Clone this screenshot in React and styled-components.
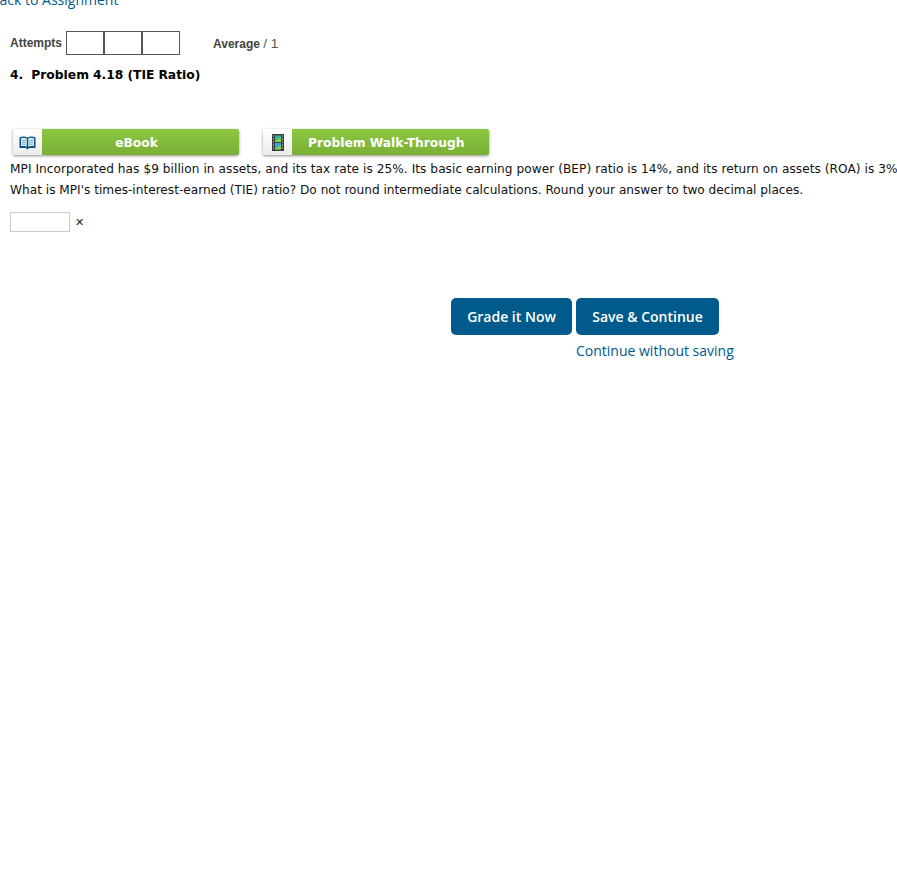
import React from "react";
import styled, { createGlobalStyle } from "styled-components";

const GlobalStyle = createGlobalStyle`
  html, body {
    margin: 0;
    padding: 0;
    background: #fff;
    overflow: hidden;
  }
`;

const Page = styled.div`
  width: 897px;
  height: 884px;
  overflow: hidden;
  position: relative;
`;

const BackLink = styled.a`
  display: block;
  margin: -11px 0 0 -9.5px;
  height: 21px;
  font: 400 14px/22px "Open Sans", sans-serif;
  color: #005a8c;
`;

const ScoreRow = styled.div`
  display: flex;
  align-items: center;
  margin: 21px 0 0 10px;
  height: 24px;
  font-family: "Liberation Sans", Arial, sans-serif;
  font-size: 12px;
  color: #444;
`;

const ScoreLabel = styled.b`
  margin-right: 4px;
`;

const Boxes = styled.div`
  display: flex;
  border: 1px solid #555;
  height: 22px;
  width: 112px;
`;

const Box = styled.div`
  flex: 1;
  & + & {
    border-left: 2px solid #555;
  }
`;

const Average = styled.div`
  margin-left: 33px;
  b {
    font-weight: 700;
  }
  span {
    font-size: 13.5px;
    color: #555;
  }
`;

const ProblemTitle = styled.h2`
  margin: 12px 0 0 10px;
  font: 700 12.3px/16px "DejaVu Sans", Verdana, sans-serif;
  word-spacing: -0.25px;
  color: #000;
  white-space: pre;
`;

const ButtonRow = styled.div`
  display: flex;
  margin: 46px 0 0 13px;
  gap: 24px;
`;

const ResourceButton = styled.div`
  display: flex;
  width: 226px;
  height: 26px;
  box-shadow: 0 1px 3px rgba(0, 0, 0, 0.45);
  border-radius: 2px;
  overflow: hidden;
`;

const IconCell = styled.div`
  width: 29px;
  flex: none;
  display: flex;
  align-items: center;
  justify-content: center;
  background: linear-gradient(#fff, #ececec);
  svg {
    display: block;
  }
`;

const ButtonLabel = styled.div`
  flex: 1;
  display: flex;
  align-items: center;
  justify-content: ${(p) => (p.$left ? "flex-start" : "center")};
  padding: ${(p) => (p.$left ? "1px 0 0 16px" : "1px 8px 0 0")};
  background: linear-gradient(#8dc642, #79b035);
  color: #fff;
  font: 700 12.25px "DejaVu Sans", Verdana, sans-serif;
`;

const QuestionBlock = styled.div`
  margin-top: 4px;
`;

const Question = styled.p`
  margin: 0 0 0 10px;
  font: 400 12.15px/21px "DejaVu Sans", Verdana, sans-serif;
  letter-spacing: ${(p) => (p.$wide ? "0.052px" : "0")};
  color: #111;
  white-space: nowrap;
`;

const AnswerRow = styled.div`
  display: flex;
  align-items: center;
  margin: 11px 0 0 10px;
  gap: 5px;
`;

const AnswerInput = styled.div`
  width: 58px;
  height: 18px;
  border: 1px solid #ccc;
  background: #fff;
`;

const Cross = styled.span`
  font: 400 11px "DejaVu Sans", Verdana, sans-serif;
  color: #222;
`;

const Actions = styled.div`
  margin: 66px 0 0 451px;
`;

const ActionButtons = styled.div`
  display: flex;
  gap: 4px;
`;

const ActionButton = styled.button`
  height: 37px;
  width: ${(p) => p.$width}px;
  padding: 0;
  border: 0;
  border-radius: 5px;
  background: #005a8c;
  color: #fff;
  font: 600 14px "Open Sans", sans-serif;
`;

const ContinueLink = styled.a`
  display: block;
  margin: 6px 0 0 125px;
  font: 400 14px/20px "Open Sans", sans-serif;
  color: #005a8c;
`;

function BookIcon() {
  return (
    <svg width="17" height="15" viewBox="0 0 17 15">
      <path d="M0.5 2.5C3 1 6 1 8.5 2.5 11 1 14 1 16.5 2.5V13H10l-1.5 1.5L7 13H0.5z" fill="#0d4f78" />
      <path d="M2 3.2C4 2.4 6 2.5 7.8 3.6V11.5C6 10.8 4 10.8 2 11.2zM15 3.2C13 2.4 11 2.5 9.2 3.6V11.5C11 10.8 13 10.8 15 11.2z" fill="#d6edf4" />
      <path d="M3 5l3.8 .4M3 7l3.8 .4M3 9l3.8 .4M14 5l-3.8 .4M14 7l-3.8 .4M14 9l-3.8 .4" stroke="#6fb0c8" strokeWidth="1" />
    </svg>
  );
}

function FilmIcon() {
  return (
    <svg width="12" height="17" viewBox="0 0 12 17">
      <rect x="0" y="0" width="12" height="17" fill="#3a3f3f" />
      <rect x="3" y="1.5" width="6" height="6.5" fill="#22b8a5" />
      <rect x="3" y="9" width="6" height="6.5" fill="#35a4e6" />
      <path d="M3 6.5l6-3.5v5H3zM3 14.5l6-3.5v4.5H3z" fill="#7fd03c" />
      <path d="M1 2h1M1 5h1M1 8h1M1 11h1M1 14h1M10 2h1M10 5h1M10 8h1M10 11h1M10 14h1" stroke="#d8dcdc" strokeWidth="1.2" />
    </svg>
  );
}

export default function App() {
  return (
    <Page>
      <GlobalStyle />
      <BackLink>Back to Assignment</BackLink>
      <ScoreRow>
        <ScoreLabel>Attempts</ScoreLabel>
        <Boxes>
          <Box />
          <Box />
          <Box />
        </Boxes>
        <Average>
          <b>Average</b> <span>/ 1</span>
        </Average>
      </ScoreRow>
      <ProblemTitle>4.  Problem 4.18 (TIE Ratio)</ProblemTitle>
      <ButtonRow>
        <ResourceButton>
          <IconCell>
            <BookIcon />
          </IconCell>
          <ButtonLabel>eBook</ButtonLabel>
        </ResourceButton>
        <ResourceButton>
          <IconCell>
            <FilmIcon />
          </IconCell>
          <ButtonLabel $left>Problem Walk-Through</ButtonLabel>
        </ResourceButton>
      </ButtonRow>
      <QuestionBlock>
        <Question $wide>
          MPI Incorporated has $9 billion in assets, and its tax rate is 25%. Its basic earning power (BEP) ratio is 14%, and its return on assets (ROA) is 3%.
        </Question>
        <Question>
          What is MPI's times-interest-earned (TIE) ratio? Do not round intermediate calculations. Round your answer to two decimal places.
        </Question>
      </QuestionBlock>
      <AnswerRow>
        <AnswerInput />
        <Cross>✕</Cross>
      </AnswerRow>
      <Actions>
        <ActionButtons>
          <ActionButton $width={121}>Grade it Now</ActionButton>
          <ActionButton $width={143}>Save &amp; Continue</ActionButton>
        </ActionButtons>
        <ContinueLink>Continue without saving</ContinueLink>
      </Actions>
    </Page>
  );
}
